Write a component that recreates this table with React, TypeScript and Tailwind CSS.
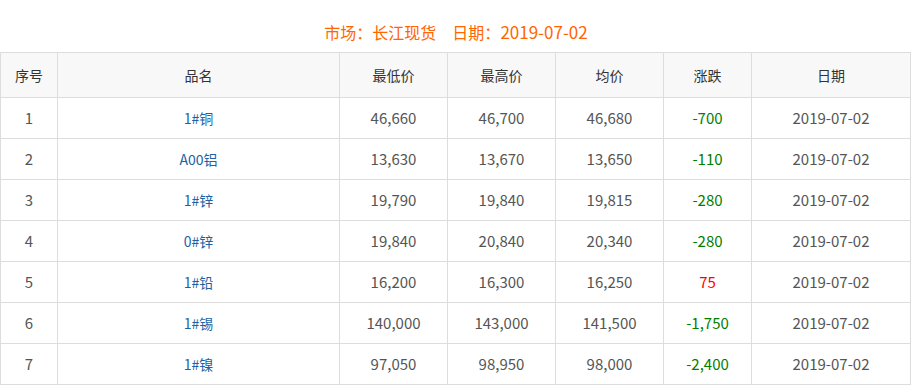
const rows = [
  { no: 1, name: '1#铜', low: '46,660', high: '46,700', avg: '46,680', chg: '-700', date: '2019-07-02' },
  { no: 2, name: 'A00铝', low: '13,630', high: '13,670', avg: '13,650', chg: '-110', date: '2019-07-02' },
  { no: 3, name: '1#锌', low: '19,790', high: '19,840', avg: '19,815', chg: '-280', date: '2019-07-02' },
  { no: 4, name: '0#锌', low: '19,840', high: '20,840', avg: '20,340', chg: '-280', date: '2019-07-02' },
  { no: 5, name: '1#铅', low: '16,200', high: '16,300', avg: '16,250', chg: '75', date: '2019-07-02' },
  { no: 6, name: '1#锡', low: '140,000', high: '143,000', avg: '141,500', chg: '-1,750', date: '2019-07-02' },
  { no: 7, name: '1#镍', low: '97,050', high: '98,950', avg: '98,000', chg: '-2,400', date: '2019-07-02' },
];

const cell = 'border border-[#dddddd] text-center font-normal';
const num = `${cell} text-[15px]`;

export default function App() {
  return (
    <div className="w-[912px] h-[386px] overflow-hidden bg-white font-['Microsoft_YaHei','Noto_Sans_CJK_SC',sans-serif]">
      <div className="h-[52px] pt-[21px] text-center text-[16px] leading-[22px] text-[#ff6600]">
        市场：长江现货<span className="inline-block w-[16px]" />日期：<span className="text-[17px]">2019-07-02</span>
      </div>
      <table className="w-[911px] border-collapse table-fixed text-[14px] text-[#555555]">
        <colgroup>
          <col className="w-[57px]" />
          <col className="w-[282px]" />
          <col className="w-[108px]" />
          <col className="w-[108px]" />
          <col className="w-[108px]" />
          <col className="w-[88px]" />
          <col className="w-[159px]" />
        </colgroup>
        <thead>
          <tr className="h-[45px] bg-[#f8f8f8] text-[#333333]">
            <th className={cell}>序号</th>
            <th className={cell}>品名</th>
            <th className={cell}>最低价</th>
            <th className={cell}>最高价</th>
            <th className={cell}>均价</th>
            <th className={cell}>涨跌</th>
            <th className={cell}>日期</th>
          </tr>
        </thead>
        <tbody>
          {rows.map((r) => (
            <tr key={r.no} className="h-[41px]">
              <td className={num}>{r.no}</td>
              <td className={`${cell} text-[#1d62a5]`}>{r.name}</td>
              <td className={num}>{r.low}</td>
              <td className={num}>{r.high}</td>
              <td className={num}>{r.avg}</td>
              <td className={`${num} ${r.chg.startsWith('-') ? 'text-[#008000]' : 'text-[#ff0000]'}`}>{r.chg}</td>
              <td className={num}>{r.date}</td>
            </tr>
          ))}
        </tbody>
      </table>
    </div>
  );
}
